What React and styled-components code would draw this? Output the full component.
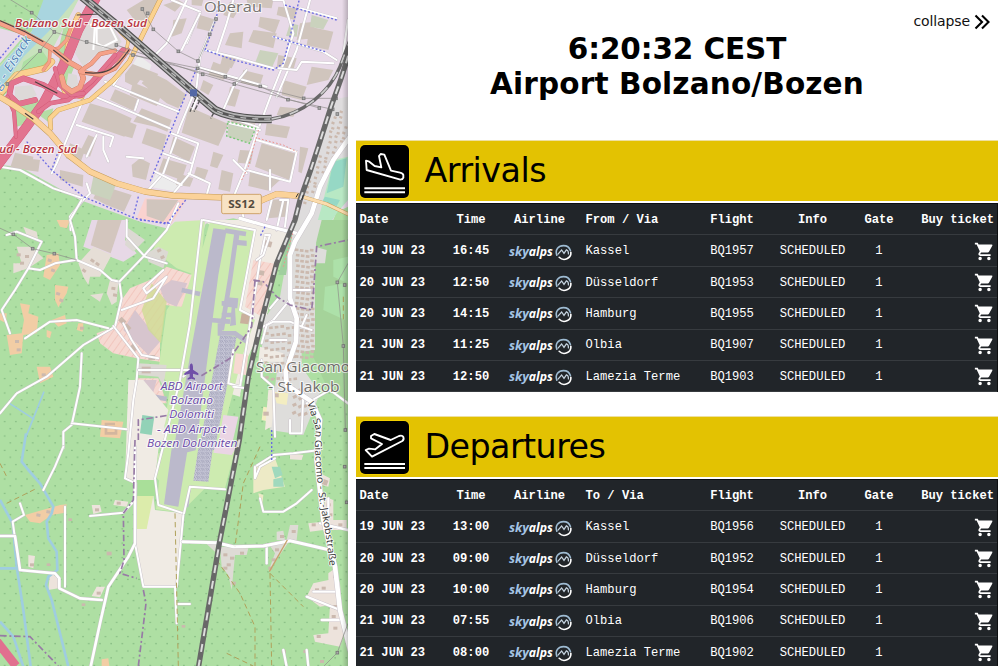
import React from 'react';
import styled, { createGlobalStyle } from 'styled-components';

const Global = createGlobalStyle`
  * { box-sizing: border-box; }
  body { margin: 0; background: #fff; overflow: hidden; }
`;

const Page = styled.div`
  display: grid;
  grid-template-columns: 348px 1fr;
  width: 1000px;
  height: 666px;
  overflow: hidden;
  color: #000;
  font-family: Verdana, 'DejaVu Sans', sans-serif;
`;

const MapPane = styled.div`
  height: 666px;
  overflow: hidden;
  svg { display: block; }
`;

const Panel = styled.main`
  padding: 0 2px 0 8px;
  min-width: 0;
`;

const TopBar = styled.div`
  display: flex;
  justify-content: flex-end;
  align-items: flex-start;
  height: 32px;
  padding: 13px 8px 0 0;
`;

const Collapse = styled.button`
  display: flex;
  align-items: center;
  gap: 4px;
  height: 17px;
  padding: 0;
  border: 0;
  background: none;
  color: #111;
  font: 14px/17px 'DejaVu Sans', sans-serif;
  letter-spacing: -0.1px;
`;

const Title = styled.h1`
  margin: 0;
  height: 108px;
  text-align: center;
  font: bold 29.5px/35px 'DejaVu Sans', sans-serif;
`;

const TitleLine = styled.span`
  display: block;
  letter-spacing: ${p => p.$spacing};
`;

const Board = styled.section`
  height: 276px;
`;

const Banner = styled.header`
  display: flex;
  align-items: center;
  gap: 15.5px;
  height: 61px;
  padding-left: 4px;
  background: #e3c202;
  border-top: 1px solid #eee0a0;
`;

const Badge = styled.div`
  width: 49px;
  height: 53px;
  border-radius: 5px;
  background: #000;
  box-shadow: 0 0 0 1px #f3d000;
  svg { display: block; }
`;

const BannerTitle = styled.h2`
  margin: 0;
  font: 33.3px/50px 'DejaVu Sans', sans-serif;
  letter-spacing: ${p => p.$spacing};
`;

const Table = styled.div`
  margin-top: 2px;
  background: #212529;
  color: #fff;
  font: 12.15px/16px 'Liberation Mono', monospace;
  border-top: 1px solid #0c0e10;
  border-right: 1px solid #0e1012;
`;

const Row = styled.div`
  display: grid;
  grid-template-columns: 90px 50px 87px 117px 64px 97px 36px 1fr;
  align-items: center;
  height: 31.4px;
  padding-top: 1.2px;
  border-bottom: 1px solid #373b3f;
  font-weight: ${p => (p.$head ? 'bold' : 'normal')};
`;

const Cell = styled.div`
  display: flex;
  justify-content: ${p => p.$align || 'center'};
  padding: ${p => p.$pad || '0'};
  font-weight: ${p => (p.$bold ? 'bold' : 'inherit')};
  white-space: pre;
  svg { display: block; }
`;

const iconStroke = { fill: 'none', stroke: '#fff', strokeWidth: 5.6, strokeLinejoin: 'round', strokeLinecap: 'round' };

const ArrivalIcon = () => (
  <svg width="49" height="53" viewBox="30 44 147 159">
    <path {...iconStroke} d="M48 91 50 119 151 148Q158 148 160 142V134Q159 129 150 127L123 121 103 73 92 71 87 77 94 111 74 107 58 94Z" />
    <path d="M43 174H165M43 186H165" stroke="#fff" strokeWidth="6" />
  </svg>
);

const DepartureIcon = () => (
  <svg width="49" height="53" viewBox="30 31 147 159">
    <path {...iconStroke} d="M47 118 66 138 157 91Q163 86 160 79 157 73 147 76L122 88 73 70 63 76V83L96 100 76 116 57 114Z" />
    <path d="M43 160H165M43 172H165" stroke="#fff" strokeWidth="6" />
  </svg>
);

const SkyAlps = () => (
  <svg width="64" height="17" viewBox="0 0 64 17">
    <g fontFamily="Open Sans, sans-serif" fontStyle="italic" fontSize="12.5" fontWeight="700">
      <text x="1" y="12.3" fill="#a4c3e4" textLength="20" lengthAdjust="spacingAndGlyphs">sky</text>
      <text x="20.8" y="12.3" fill="#fff" textLength="24" lengthAdjust="spacingAndGlyphs">alps</text>
    </g>
    <g fill="none" strokeLinecap="round">
      <path d="M48.8 11.2C46.8 5.5 50.5 1.6 55.5 1.6 59 1.6 61.5 3.8 62.4 6.4" stroke="#9ebbd2" strokeWidth="1.6" />
      <path d="M50 10.2 53.6 6 56 9.4 58.4 5.8C60.2 6.6 60.6 8.4 60.4 10" stroke="#c5d3df" strokeWidth="1.2" />
      <path d="M51.2 13.3C55.5 17.6 63.6 14.8 62.8 8.2" stroke="#fff" strokeWidth="1.6" />
    </g>
  </svg>
);

const CartIcon = () => (
  <svg width="21" height="21" viewBox="0 0 24 24" fill="#fff">
    <path d="M7 18a2 2 0 1 0 0 4 2 2 0 0 0 0-4zM1 2v2h2l3.6 7.59-1.35 2.45C4.52 15.37 5.48 17 7 17h12v-2H7.42a.25.25 0 0 1-.25-.25l.03-.12.9-1.63h7.45c.75 0 1.41-.41 1.75-1.03l3.58-6.49A1 1 0 0 0 20 4H5.21l-.94-2H1zm16 16a2 2 0 1 0 0 4 2 2 0 0 0 0-4z" />
  </svg>
);

/* ---------- Map ---------- */

const Poly = ({ c, p, o }) => <path fill={c} opacity={o} d={p} />;

const Road = ({ d, w = 9, c = '#fff', k = '#c9c2c9' }) => (
  <g fill="none" strokeLinejoin="round" strokeLinecap="round">
    <path d={d} stroke={k} strokeWidth={w + 2.5} />
    <path d={d} stroke={c} strokeWidth={w} />
  </g>
);

const Dash = ({ d, c = '#6a6ae2', w = 4, a = '6 6' }) => (
  <path d={d} fill="none" stroke={c} strokeWidth={w} strokeDasharray={a} />
);

const Label = ({ x, y, s = 32, w, color = '#6b4aa8', weight = 500, italic = true, halo = 6, children }) => (
  <text x={x} y={y} fontSize={s} textLength={w} lengthAdjust="spacingAndGlyphs" fill={color} fontWeight={weight}
    fontStyle={italic ? 'italic' : 'normal'} stroke="#fff" strokeWidth={halo} strokeOpacity="0.75" paintOrder="stroke" strokeLinejoin="round">
    {children}
  </text>
);

const northBuildings = `M375 222 398 192 475 222 452 250 420 240 405 260 375 245Z M398 247 485 282 470 318 390 285Z M330 300 345 268 412 296 400 332Z
M425 250 450 215 500 240 560 285 535 325 500 310Z M270 310 340 330 395 355 373 410 330 395 245 365Z M400 365 425 325 515 360 502 395 465 380Z M375 360 410 375 397 415 373 408Z
M440 385 500 405 488 452 425 430Z M567 320 685 372 655 438 545 398Z M210 430 255 450 240 492 198 475Z M265 405 290 415 270 470 240 455Z M395 495 420 475 450 490 438 540 398 530Z
M180 510 250 525 248 560 180 540Z M490 475 560 495 545 540 475 515Z M520 410 585 440 567 485 508 455Z M440 598 535 600 490 665 440 648Z M300 555 395 585 372 635 320 615 280 595Z
M535 520 580 535 570 560 528 555Z M590 500 625 510 612 545 580 532Z M640 455 670 465 652 505 630 498Z M665 510 700 520 690 575 655 568Z M785 430 890 462 868 540 765 500Z
M750 515 840 540 805 572 745 558Z M700 345 770 360 760 385 690 372Z M730 210 790 225 778 262 722 248Z M835 20 890 25 885 60 830 45Z M780 50 840 60 825 100 775 80Z
M690 5 725 15 700 55 670 45Z M760 90 830 100 820 145 745 125Z M900 70 945 65 940 115 890 120Z M930 80 1000 95 985 150 920 135Z M520 60 560 55 545 100 515 110Z
M600 45 650 60 635 95 590 85Z M690 100 730 95 725 145 675 135Z M670 160 710 175 695 205 660 198Z M640 185 690 205 670 240 625 225Z M835 165 890 175 880 210 830 205Z
M850 240 920 260 905 300 845 285Z M935 200 1000 210 985 240 920 255Z M380 30 430 0 475 0 450 45 415 75Z M490 15 535 0 550 8 525 35Z M575 0 610 0 605 18 575 15Z M740 0 820 0 815 25 745 20Z
M720 590 785 605 770 640 715 620Z M810 600 870 595 855 650 805 655Z M45 458 100 470 95 510 30 505Z M80 475 120 480 115 515 75 510Z M720 450 760 452 752 492 712 488Z
M840 320 890 325 880 350 830 345Z M800 370 870 380 860 415 795 405Z M900 440 925 445 905 520 895 515Z M610 240 640 255 625 285 600 270Z M690 260 720 270 705 320 680 315Z`;

const smallHouses = (cells) => cells.map(([x, y, a = 0, s = 9], i) => (
  <rect key={i} x={x} y={y} width={s * 1.35} height={s} fill="#cbb9ae" transform={`rotate(${a} ${x} ${y})`} />
));

const eastHouses = [];
for (let r = 0; r < 26; r += 1) {
  for (let c = 0; c < 7; c += 1) {
    const x = 925 + c * 19 - r * 3 + ((r * 7 + c * 3) % 5);
    const y = 330 + r * 15 + ((c * 5 + r) % 6);
    if (x < 1035 - Math.max(0, r - 5) * 9 && x > 1008 - (y - 330) * 0.4) eastHouses.push([x, y, 15 + ((r * c) % 9), 7]);
  }
}
const villageHouses = [];
for (let r = 0; r < 21; r += 1) {
  for (let c = 0; c < 4; c += 1) villageHouses.push([885 + c * 15 + ((r * 3) % 5), 745 + r * 16 + ((c * 7) % 5), 5, 8]);
}
for (let r = 0; r < 8; r += 1) {
  for (let c = 0; c < 6; c += 1) villageHouses.push([790 + c * 17 + ((r * 5) % 6), 975 + r * 22 + ((c * 5) % 7), -5, 8]);
}
for (let r = 0; r < 4; r += 1) {
  for (let c = 0; c < 3; c += 1) villageHouses.push([872 + c * 17 + ((r * 5) % 6), 1165 + r * 24 + ((c * 5) % 7), -25, 9]);
}

const pylons = [[95, 38], [120, 153], [163, 96], [260, 126], [349, 135], [399, 165], [427, 27], [443, 40], [460, 88], [535, 154], [594, 183], [593, 205], [608, 223], [676, 230], [703, 252],
  [781, 259], [864, 299], [911, 295], [958, 324], [998, 328], [1012, 342], [1008, 295], [648, 57], [629, 103], [22, 252], [40, 703], [98, 746], [163, 761], [1012, 847], [1034, 855], [1030, 1038], [1036, 1290], [1034, 1400], [1040, 1507], [1012, 1958]];

const rail = 'M1055 120C1035 220 1005 280 990 330L958 430 932 510 900 600 885 660 830 790 785 960 745 1130 718 1320 658 1630 594 2010';
const branch = 'M240 -15 350 75 580 275 645 330Q705 360 815 357';
const branchTail = 'M815 357C910 342 990 275 1020 200L1050 120';

const AreaMap = () => (
  <svg width="348" height="666" viewBox="0 0 1044 1998" fontFamily="'Open Sans', 'Noto Sans', sans-serif" role="img" aria-label="Map">
    <defs>
      <pattern id="orchard" width="33.6" height="43" patternUnits="userSpaceOnUse" patternTransform="translate(0 8)">
        <circle cx="14" cy="10" r="2.2" fill="#75ad75" /><circle cx="31" cy="31" r="2.2" fill="#75ad75" />
      </pattern>
      <pattern id="speckle" width="14" height="12" patternUnits="userSpaceOnUse">
        <rect width="14" height="12" fill="#c5c5d5" /><path d="M1 2 5 4M8 1 10 5M4 9 7 7M11 10 13 8" stroke="#7f7f9c" strokeWidth="2.2" />
      </pattern>
      <pattern id="hatch" width="18" height="18" patternUnits="userSpaceOnUse" patternTransform="rotate(35)">
        <path d="M0 0V18" stroke="#eeb4aa" strokeWidth="3" />
      </pattern>
      <linearGradient id="edge"><stop offset="0" stopOpacity="0" /><stop offset="1" stopOpacity=".2" /></linearGradient>
    </defs>
    <rect width="1044" height="1998" fill="#aedfa3" />
    <rect width="1044" height="1998" fill="url(#orchard)" />

    {/* industrial and residential land */}
    <Poly c="#e8dae8" p="M230 0H1044V620L880 700 700 655 520 690 420 665 240 600 60 500 0 495V300L150 140Z" />
    <Poly c="#aedfa3" p="M0 0H175L110 65 40 95 0 60Z" />
    <Poly c="url(#orchard)" p="M0 0H175L110 65 40 95 0 60Z" />
    <Poly c="#e8dae8" p="M0 85 75 105 0 190Z" />
    <Poly c="#c8e2bd" p="M0 195 180 0 235 0 140 180 40 225 0 260Z" />
    <Poly c="#a9d5df" p="M130 0H225L150 90 70 170 0 270V200L95 95Z" />
    <Poly c="#aedfa3" p="M70 185 125 150 150 185 110 215 60 220Z" />
    <Poly c="#b4dda5" p="M30 310 95 290 145 315 85 370 50 380Z M180 165 225 195 195 270 170 235Z M190 85 235 50 240 90 200 190 175 150Z M110 340 160 325 150 370Z" />
    <Poly c="#ddd9d8" p="M255 60 330 65 365 125 345 150 285 165 250 200 225 160Z M205 220 230 225 235 255 215 270 200 250Z M45 260 95 255 110 285 80 305 45 295Z" />
    <path d="M270 75 285 70 280 150M290 85 330 80 350 120 310 140 290 130Z" fill="none" stroke="#fff" strokeWidth="6" />
    <Poly c="#dedcdd" p="M1044 290 990 300 940 470 905 620 855 760H960L1044 550Z" />
    <Poly c="#b8e8c4" p="M1000 480 1044 470V600L1010 640 970 700 945 690 965 620Z" />
    <Poly c="#96d8c5" p="M1000 485 1040 475 1030 560 980 580Z M975 590 1020 600 1010 618 965 608Z" />
    <Poly c="#fad2cf" p="M435 595 558 600 515 672 410 655Z" />
    <Poly c="#ececec" p="M470 515 545 550 530 575 448 560Z M415 165 455 195 435 248 385 215Z" />
    <Poly c="#d0c5bd" p={northBuildings} />
    <Poly c="#cad2bd" p="M685 370 765 385 750 430 683 410Z M780 150 835 160 815 205 765 190Z M280 530 350 548 330 600 270 580Z M870 70 895 75 890 110 858 108Z M935 45 985 60 970 88 930 80Z" />
    {smallHouses(eastHouses)}

    {/* farmland */}
    <g transform="translate(0 660)">
      <Poly c="#e7d8e6" p="M275 0H385L375 60 410 100 370 125 250 80Z" />
      <Poly c="#d3c6be" p="M293 0H365L332 100 272 76Z" />
      <Poly c="#ecd8e4" p="M530 0 620 0 605 50Z" />
      <Poly c="#f0ebe4" p="M610 0 720 0 880 35 830 130 800 290 735 430 720 530 685 520 700 280 730 90Z" />
      <Poly c="#cdebb0" p="M525 5 615 0 600 170 530 145 460 90 470 60Z M595 130 630 5 765 30 750 120 720 270 765 300 730 400 680 590 640 780 550 870 470 860 490 640 510 500 475 450 500 270Z" />
      <Poly c="#f6d9d2" p="M500 140 575 165 545 260 495 255 480 370 480 425 410 415 340 400 300 370 290 340 345 320 365 240 390 205 450 180Z M760 120 828 132 785 290 735 260Z M410 475 475 475 500 550 470 550 400 545Z M707 400 745 405 738 465 700 460Z" />
      <Poly c="url(#hatch)" p="M500 140 575 165 545 260 495 255 480 370 480 425 410 415 340 400 300 370 290 340 345 320 365 240 390 205 450 180Z M760 120 828 132 785 290 735 260Z M410 475 475 475 500 550 400 545Z" />
      <Poly c="#d7c5ce" p="M405 270 480 365 445 405 370 330Z M515 180 562 190 530 260 495 245 480 205Z M415 480 470 480 455 535 410 530Z" />
      <Poly c="#d0dc93" p="M425 270 455 190 500 245 483 370 445 330Z" o=".8" />
      <Poly c="#f0ebe4" p="M408 555 480 550 500 660 405 670Z" />
      <Poly c="#92d2b7" p="M427 585 463 590 455 645 420 640Z M433 550 460 555 455 570 433 568Z M470 568 485 570 482 590 468 586Z" />
      <Poly c="#ead5e4" p="M670 585 715 590 690 700 650 700Z" />

      {/* runway and aprons */}
      <Poly c="#bbb9cb" p="M640 25 680 30 655 165 565 862 492 852 575 380Z" />
      <g fill="none" stroke="#bbb9cb" strokeWidth="14">
        <path d="M675 32 738 42M710 38 690 180 665 330M545 210 600 222M630 300 690 305M665 250H710M665 285H700M660 310V340H705L740 365" />
        <path d="M500 537 460 530" />
      </g>
      <Poly c="#bbb9cb" p="M710 45 718 45 716 60 740 62V78L710 75Z M680 232 715 235 712 265 705 265 708 315 690 318 695 262 675 260Z" />
      <Poly c="url(#speckle)" p="M660 345 710 350 625 785 580 782Z" />
      <Poly c="#c9b09d" p="M725 280 750 285 745 313 720 310Z" />

      {/* village */}
      <Poly c="#a5d39a" p="M950 0 1044 0V540L980 500 940 410Z" />
      <Poly c="#dedddb" p="M890 0H965L945 80 980 90 975 130 945 130 945 390 905 395 905 440 960 520 910 645 810 630 830 460 785 400 790 300 840 230 870 60Z" />
      <Poly c="#ade1a9" p="M975 200 1035 190V300L970 270Z M1000 120 1044 110V190L1000 170Z" />
      <Poly c="#a0cf9f" p="M855 90 878 35 858 165 835 165Z" />
      <Poly c="#f0ebe4" p="M780 380 850 400 850 425 775 425Z" />
      <Poly c="#f3edc1" p="M820 515 865 520 860 555 830 550Z M790 560 815 565 808 605 785 600Z" />
      <Poly c="#efe9dd" p="M805 510 825 510 815 620 795 630Z" />
      <Poly c="#f2cda5" p="M60 250 90 255 85 280 115 290 110 340 70 345 65 400 30 405 20 345 65 340 72 300Z M165 195 205 200 200 220 175 262 165 240Z M110 440 150 440 160 470 120 490Z M305 600 370 605 360 655 300 650Z M0 280 20 280 18 310 0 300Z M140 105 175 100 180 135 150 180 130 170Z M170 0 210 0 200 25 180 20Z M235 310 250 310 248 335 230 330Z M155 300 195 285 200 310 175 320Z M140 330 155 335 150 355 140 350Z" />
      <path d="M345 612H318V640H348V628" fill="none" stroke="#d3b69e" strokeWidth="8" />
      <Poly c="#e6ded6" p="M280 80 335 105 300 170 270 170 265 195 250 170 235 130Z M330 180 355 185 350 245 335 255 320 220Z M270 225 310 220 300 245Z M50 80 95 80 130 115 85 145 40 160 40 130 65 130Z M70 20 110 35 115 60 80 45Z" />
      <Poly c="#dcd9d3" p="M385 25 435 60 400 95 375 75Z M440 100 475 80 505 95 490 145 445 125Z M415 430 500 435 490 500 475 470 415 465Z" />
      {smallHouses([[50, 100], [75, 105], [60, 125], [145, 115, 20], [155, 145, 20], [170, 215, 20], [180, 235, 20], [45, 360], [50, 385], [125, 460], [240, 320], [275, 115, 35], [290, 125, 35], [250, 145, 35], [335, 200, 10], [340, 220, 10], [470, 90, -25], [480, 110, -25], [365, 290, 45, 15], [400, 370, 45, 15], [380, 310, 45, 15], [445, 405, 0, 15], [775, 150, 10, 14], [770, 180, 10, 14], [795, 60, 15, 17], [425, 440, 0, 20], [820, 520, 0, 12], [790, 575, 0, 12]])}
    </g>
    {smallHouses(villageHouses)}

    <g transform="translate(0 1320)">
      <Poly c="#f0ebe4" p="M385 -180 430 -180 505 -90 475 30 465 120 375 120Z M408 165 460 165 465 210 552 220 530 440 430 440 405 310Z" />
      <Poly c="#92d2b7" p="M427 -75 463 -70 455 -15 420 -20Z" />
      <Poly c="#cdebb0" p="M475 40H550L590 30H705L675 145 570 140 552 218 468 208 480 125 467 110Z" />
      <Poly c="#bbb9cb" p="M515 25 563 28 535 200 492 193Z" />
      <Poly c="url(#speckle)" p="M595 25 638 28 625 125 580 122Z" />
      <Poly c="#ead5e4" p="M645 20H710L695 45 640 38Z" />
      <Poly c="#dcecab" p="M408 168H460L440 267H405Z" />
      <Poly c="#a9df99" p="M408 120H470L465 168H405Z" />
      <Poly c="#f2cda5" p="M75 225 180 195 200 193 195 218 155 225 120 250 90 245Z M305 658 325 655 328 678H305Z" />
      <Poly c="#edeac6" p="M760 80 825 55 855 140 790 150 760 160Z M775 160 790 165 785 210Z" />
      <Poly c="#a0d9bd" p="M815 80 840 80 848 105 825 115Z M820 118 848 112 852 140 820 140Z" />
      <Poly c="#dedbd5" p="M660 320 745 325 740 345 705 345 695 450 685 405 665 380Z M805 310 870 300 805 395 825 340Z M870 255 895 255 890 300 860 300Z M830 275 850 272 855 300H830Z M620 312 650 310 645 335Z" />
      <Poly c="#ede3dc" p="M960 100 990 115 985 140 965 135Z M975 170 1000 180 1000 240 1040 240V270L970 270 930 275 925 250 970 245Z M940 430 985 420 985 400 1005 385 1020 430 1030 590 1020 620 945 605 940 585 985 580 990 495 960 500 920 470Z M275 195 300 195 305 215 280 222Z M345 180 385 185 380 200 340 195Z M85 345 105 348 100 385 85 380Z M150 400 180 415 175 445 145 450Z M290 440 315 440 300 472 275 468Z M870 40 910 45 905 60 870 58Z" />
      {smallHouses([[670, 340], [690, 350], [680, 370], [720, 335], [670, 380], [695, 425], [825, 325], [815, 355], [805, 380], [875, 270], [840, 285], [935, 250], [985, 220], [945, 445], [965, 440], [1000, 495], [995, 525], [1000, 560], [1000, 405], [950, 585], [350, 185], [285, 205], [90, 370], [290, 455], [110, 220, 10], [140, 210, 10], [845, 630], [910, 630], [960, 660], [965, 115, 20, 16], [980, 190], [1015, 250], [320, 335, 0, 11], [140, 370, 0, 8], [205, 235, 0, 8], [545, 555, 0, 8], [245, 490, 0, 8]])}
    </g>

    {/* rivers */}
    <g transform="translate(0 1320)" fill="none" stroke="#9fcde0" strokeWidth="8" strokeLinejoin="round">
      <path d="M78 -20 65 65 85 90 120 130 160 200 155 220 140 245 145 295 170 335 172 390 145 410 138 435 155 480 205 680M0 180 38 250 50 380 70 510 92 680M0 545 40 590 70 680M0 385H50" />
      <path d="M132 -145 78 -10M25 -112 103 -62" strokeWidth="5" />
    </g>

    {/* minor roads */}
    <g>
      {[
        'M515 0 600 35 560 130M560 0 500 130 470 160', 'M600 40 545 150M650 50 600 170 590 260 540 380 490 520 445 570',
        'M820 0H850L880 100 855 180 815 280 770 400 730 520 705 580', 'M615 150 700 170 820 205M590 200 800 260M930 0 890 150 830 290',
        'M900 25 1010 55M820 110 970 155 1010 180M835 205 890 210 905 185 1000 190', 'M700 0 680 70 650 160M740 210 700 260 672 325',
        'M315 245 535 335M285 290 510 385M415 300 405 330', 'M245 310 220 370 170 490 155 520M230 375 340 410 330 440M290 405 260 470M310 410 310 450 325 485',
        'M515 400 595 430 570 520 520 580M490 460 575 490M465 515 545 555M565 520 630 550 620 585', 'M770 420 890 455 870 545M740 510 870 545M700 480 740 520M810 510V570',
        'M340 255 400 165', 'M850 600 830 690M815 600 800 660M840 600H865L855 680M720 600 730 650', 'M0 500 60 510 160 565 250 595M250 600 210 650 212 690',
        'M690 370 780 390M380 470 430 475M260 550 270 580 240 610M600 300 680 350 775 382M1044 60 1030 160',
      ].map(d => <Road key={d} d={d} w={6} />)}
    </g>
    <g transform="translate(0 660)">
      {[
        'M245 -60 210 0 225 50 230 120 300 150 335 180 358 185 365 235 345 320 250 375 140 470 50 520 0 580', 'M225 120 165 130 120 150 85 145M20 45 50 35 125 65 105 105 85 145 45 210 5 270 30 340',
        'M75 355 150 305 230 300 325 325M535 -50 500 30 430 110 358 185M380 0V50L435 110 500 130M245 400 240 500 215 615 190 635 190 685',
        'M340 318 415 415 410 480 400 540 385 700 375 775 408 790 405 970M215 610 310 620 380 628', 'M365 270 460 235 500 170 440 220 430 205 490 150M370 310 395 360 425 405 475 415M415 450H570L550 470',
        'M605 0 570 310 540 480 465 775 475 855 550 880M610 0 765 30 720 270 760 290M755 280 720 500 685 490 700 390M795 50 780 120 755 280',
        'M795 45H810L790 105 770 120', 'M865 210 930 210M865 245 820 300 790 320M835 235 810 265', 'M785 370 800 315 820 305H870L905 320 935 330M905 320 920 285M810 360H860',
        'M785 420V470L820 500 825 650M870 600V640H905L910 520M1044 550 990 510 920 550M700 500 740 505',
      ].map(d => <Road key={d} d={d} w={6} />)}
      <Road d="M720 -5 790 15 890 40" w={10} />
    </g>
    <g transform="translate(0 1320)">
      {[
        'M190 20 165 80 130 150M60 190 72 225 38 245 45 295 60 390', 'M195 200V440M270 228 370 218 405 180 403 120',
        'M405 310 430 440H525L530 550M530 492H570M530 440 550 225M570 140 552 220M570 140 675 148', 'M765 80 820 45 880 40 960 30M780 175 790 215 850 215 890 190 935 150', 'M765 80V115L780 80 825 55',
      ].map(d => <Road key={d} d={d} w={6} />)}
      {['M800 315V370', 'M920 470 1020 510M940 455 1010 455M965 540H1020M960 250 1044 270M985 175V225M850 630 860 680M920 630 925 680'].map(d => <Road key={d} d={d} w={7} />)}
      <Road d="M0 288H45L60 390 165 400 178 415V445L240 475 305 480" w={8} />
      <Road d="M405 20V310L385 350 325 440 300 550 272 680" w={8} />
      <Road d="M548 305 650 308 700 320 790 318 870 302 980 328" w={9} />
    </g>
    <Road d="M1050 410 1000 480 960 560 935 640 885 725 870 765 870 895 890 955 888 1025 857 1115 860 1155 935 1205 960 1260 950 1380 970 1560 1005 1700 1020 1830 1055 1970" w={14} />

    {/* boundaries and paths */}
    <Dash d="M900 -10 850 190 820 210 700 180 615 150 650 50 655 10M855 15 1010 60M820 110 975 155M590 205 450 545M80 425 155 510 250 590 405 655 500 672 565 590M180 440 155 510M415 590 400 650M420 660 510 670" />
    <Dash d="M0 175 45 120 100 65" /><Dash d="M815 1290V1380" /><Dash d="M795 680 780 710" />
    <Dash d="M775 390 745 500 725 540M775 415 850 435 890 455M878 700 850 800" c="#ed928c" w={3} a="5 6" />
    <Dash d="M683 365 767 385 748 430 680 408Z" c="#78c876" />
    <Dash d="M525 1540 535 2000M780 1340 730 1450 705 1640M650 1680 720 1780 765 1880V1998M810 1720 815 2000M810 1720 910 1820M20 1510 110 1465M680 1960 760 1998M0 1390 20 1430M1030 890V960" c="#b0a15a" w={3} a="16 10" />
    <Dash d="M765 840 755 980 690 1075 600 1130M760 840 790 845 830 890 870 915 935 930 940 880 950 740 1044 720M415 1320V1260L510 1245M405 1320 400 1500 370 1540 372 1680 360 1720 410 1735M430 1770 438 1810 415 1998M0 1907 90 1910 175 1998" c="#977ba5" w={5} a="20 8 6 8" />
    <Dash d="M808 1715 862 1620" c="#c7a26c" a="none" />

    {/* trunk roads and motorway interchange */}
    <Road d="M485 -10 430 100 388 185 340 240 270 300 175 330 150 355 152 385" w={12} c="#fbd28f" k="#c4974e" />
    <Road d="M155 185 135 205 50 225 5 275" w={18} c="#fbd08f" k="#c4974e" />
    <Road d="M300 40 330 55 360 95 385 120 380 150" w={8} c="#fbd28f" k="#c4974e" />
    <Road d="M235 45 205 110 200 185M175 225 195 275 245 290" w={14} c="#fbd08f" k="#c4974e" />
    <Road d="M290 -10 262 40 235 90 205 165 165 245 130 310 80 380 -10 500" w={27} c="#e2748f" k="#d35876" />
    <Road d="M370 150 320 205 285 245 245 285 190 290 130 255 70 235 35 250 28 285 55 312 105 300" w={15} c="#e2748f" k="#d35876" />
    <Road d="M345 165 275 245 205 300 150 310 115 335" w={11} c="#e2748f" k="#d35876" />
    <Road d="M22 290 42 335 48 410" w={10} c="#e2748f" k="#d35876" />
    <Road d="M165 205 180 255 215 285 250 280" w={11} c="#e2748f" k="#d35876" />
    <Road d="M215 75 200 120 175 145 150 150 148 185 130 210" w={8} c="#f5a189" k="#d98a68" />
    <Road d="M-10 65 75 100 155 145 205 185 240 205 250 235 240 262 215 275 192 258 185 230" w={14} c="#f5a189" k="#c57d62" />
    <Road d="M240 215 300 225 345 205 385 150M245 210 275 190 300 162 345 152" w={11} c="#f5a189" k="#c57d62" />
    <Road d="M-10 285 40 315 100 355 150 400 205 465 270 515 350 550 435 575 520 587 660 592 760 612 830 582 900 588" w={16} c="#fbd299" k="#c49a56" />
    <Road d="M900 588 980 612 1050 645" w={9} c="#fbdcae" k="#c49a56" />
    <path d="M105 245 172 280M160 150 205 185M255 218C320 225 345 210 388 148M0 62 75 95 130 125M75 340 100 358M230 45 300 42" fill="none" stroke="#4b4040" strokeWidth="3.5" />
    <path d="M-20 1910 48 1998" stroke="#e1708f" strokeWidth="26" />

    {/* power lines */}
    <g fill="none" stroke="#8c8a88" strokeWidth="2">
      <path d="M0 -20 95 38 163 96 260 126 399 165 594 205 676 230 781 259 864 299 998 328M427 27 460 88 535 154 594 183M22 252 120 153 163 96M349 135 608 223 703 252 958 324M399 165 911 295 1008 295M648 57 629 103 594 183M-10 680 40 703 98 746 163 761 230 780M1044 790 1012 847 1030 1038 1036 1290M1044 1870 1012 1958 970 2000" />
    </g>
    {pylons.map(([x, y], i) => <rect key={i} x={x - 4} y={y - 4} width="8" height="8" fill="#aaa" stroke="#777" strokeWidth="2.5" />)}

    {/* railways */}
    <g fill="none">
      <path d={branch} stroke="#515151" strokeWidth="25" />
      <path d={branch} stroke="#b5b5b5" strokeWidth="18" />
      <path d={branch} stroke="#555" strokeWidth="8" />
      <path d={branch} stroke="#bbb" strokeWidth="4" strokeDasharray="18 18" />
      <path d={branchTail} stroke="#686868" strokeWidth="10" />
      <path d={branchTail} stroke="#ccc" strokeWidth="5" strokeDasharray="28 28" />
      <path d={rail} stroke="#686868" strokeWidth="16" />
      <path d={rail} stroke="#ddd" strokeWidth="6" strokeDasharray="24 24" />
      <path d="M588 292 570 335M600 300 582 335M642 338 632 355" stroke="#555" strokeWidth="4" strokeDasharray="14 4" />
      <path d="M593 292 577 330" stroke="#fff" strokeWidth="5" />
      <path d="M895 580 888 592M910 585 905 600" stroke="#333" strokeWidth="3" />
    </g>
    <rect x="570" y="268" width="21" height="21" fill="#5368a5" />

    {/* place names */}
    <Label x="612" y="36" s="45" w="174" color="#77736f" weight={400} italic={false}>Oberau</Label>
    <Label x="45" y="80" s="31" w="396" color="#b83340" weight={600}>Bolzano Sud - Bozen Sud</Label>
    <Label x="-2" y="460" s="31" w="234" color="#b83340" weight={600}>ud - Bozen Sud</Label>
    <g transform="translate(18 239) rotate(-58)"><Label x="-35" y="0" s="37" w="178" color="#5283b9" halo={4}>g - Eisack</Label></g>
    <g>
      <rect x="665" y="583" width="119" height="58" rx="5" fill="#f8e2c4" stroke="#cfa46b" strokeWidth="3" />
      <text x="685" y="624" fontSize="33" fontWeight="700" fill="#534b3d" textLength="79" lengthAdjust="spacingAndGlyphs">SS12</text>
    </g>
    <path fill="#7050a8" d="M574 1090Q569 1092 569 1100V1109L553 1120V1126L569 1121V1131L563 1135V1139L574 1136 585 1139V1135L579 1131V1121L595 1126V1120L579 1109V1100Q579 1092 574 1090Z" />
    <Label x="482" y="1169" w="186">ABD Airport</Label>
    <Label x="511" y="1212" w="128">Bolzano</Label>
    <Label x="508" y="1255" w="134">Dolomiti</Label>
    <Label x="471" y="1298" w="207">- ABD Airport</Label>
    <Label x="441" y="1342" w="271">Bozen Dolomiten</Label>
    <Label x="768" y="1116" s="44" w="282" color="#716e6b" weight={400} italic={false}>San Giacomo</Label>
    <Label x="805" y="1177" s="44" w="214" color="#716e6b" weight={400} italic={false}>- St. Jakob</Label>
    <path id="via" d="M922 1208 948 1290Q943 1320 946 1370T957 1490L978 1610 990 1706" fill="none" />
    <text fontSize="29" fontWeight="500" fill="#343434" stroke="#fff" strokeWidth="5" strokeOpacity=".8" paintOrder="stroke">
      <textPath href="#via" textLength="498" lengthAdjust="spacingAndGlyphs">Via San Giacomo - St.-Jakobstraße</textPath>
    </text>
    <rect x="1026" width="18" height="1998" fill="url(#edge)" />
  </svg>
);

const arrivals = [
  ['19 JUN 23', '16:45', 'Kassel', 'BQ1957'],
  ['20 JUN 23', '12:50', 'Düsseldorf', 'BQ1953'],
  ['20 JUN 23', '14:15', 'Hamburg', 'BQ1955'],
  ['21 JUN 23', '11:25', 'Olbia', 'BQ1907'],
  ['21 JUN 23', '12:50', 'Lamezia Terme', 'BQ1903'],
];
const departures = [
  ['19 JUN 23', '13:00', 'Kassel', 'BQ1956'],
  ['20 JUN 23', '09:00', 'Düsseldorf', 'BQ1952'],
  ['20 JUN 23', '10:00', 'Hamburg', 'BQ1954'],
  ['21 JUN 23', '07:55', 'Olbia', 'BQ1906'],
  ['21 JUN 23', '08:00', 'Lamezia Terme', 'BQ1902'],
];

const FlightBoard = ({ title, spacing, icon, place, flights }) => (
  <Board>
    <Banner>
      <Badge>{icon}</Badge>
      <BannerTitle $spacing={spacing}>{title}</BannerTitle>
    </Banner>
    <Table>
      <Row $head>
        <Cell $align="flex-start" $pad="0 0 0 3.5px">Date</Cell>
        <Cell>Time</Cell>
        <Cell>Airline</Cell>
        <Cell $align="flex-start" $pad="0 0 0 2.5px">{place}</Cell>
        <Cell>Flight</Cell>
        <Cell>Info</Cell>
        <Cell>Gate</Cell>
        <Cell $align="flex-end" $pad="0 3px 0 0">Buy ticket</Cell>
      </Row>
      {flights.map(([date, time, city, code]) => (
        <Row key={code}>
          <Cell $bold $align="flex-start" $pad="0 0 0 3.5px">{date}</Cell>
          <Cell $bold>{time}</Cell>
          <Cell $pad="2px 0 0 1px"><SkyAlps /></Cell>
          <Cell $align="flex-start" $pad="0 0 0 2.5px">{city}</Cell>
          <Cell>{code}</Cell>
          <Cell>SCHEDULED</Cell>
          <Cell>1</Cell>
          <Cell $align="flex-end" $pad="0 2px 0 0"><CartIcon /></Cell>
        </Row>
      ))}
    </Table>
  </Board>
);

export default function App() {
  return (
    <>
      <Global />
      <Page>
        <MapPane><AreaMap /></MapPane>
        <Panel>
          <TopBar>
            <Collapse>
              collapse
              <svg width="16" height="16" viewBox="0 0 16 16" fill="none" stroke="#000" strokeWidth="2.1">
                <path d="M1.5 1.5 8 8 1.5 14.5M8 1.5 14.5 8 8 14.5" />
              </svg>
            </Collapse>
          </TopBar>
          <Title>
            <TitleLine $spacing="-0.1px">6:20:32 CEST</TitleLine>
            <TitleLine $spacing="0.15px">Airport Bolzano/Bozen</TitleLine>
          </Title>
          <FlightBoard title="Arrivals" spacing="-0.5px" icon={<ArrivalIcon />} place="From / Via" flights={arrivals} />
          <FlightBoard title="Departures" spacing="-0.55px" icon={<DepartureIcon />} place="To / Via" flights={departures} />
        </Panel>
      </Page>
    </>
  );
}
